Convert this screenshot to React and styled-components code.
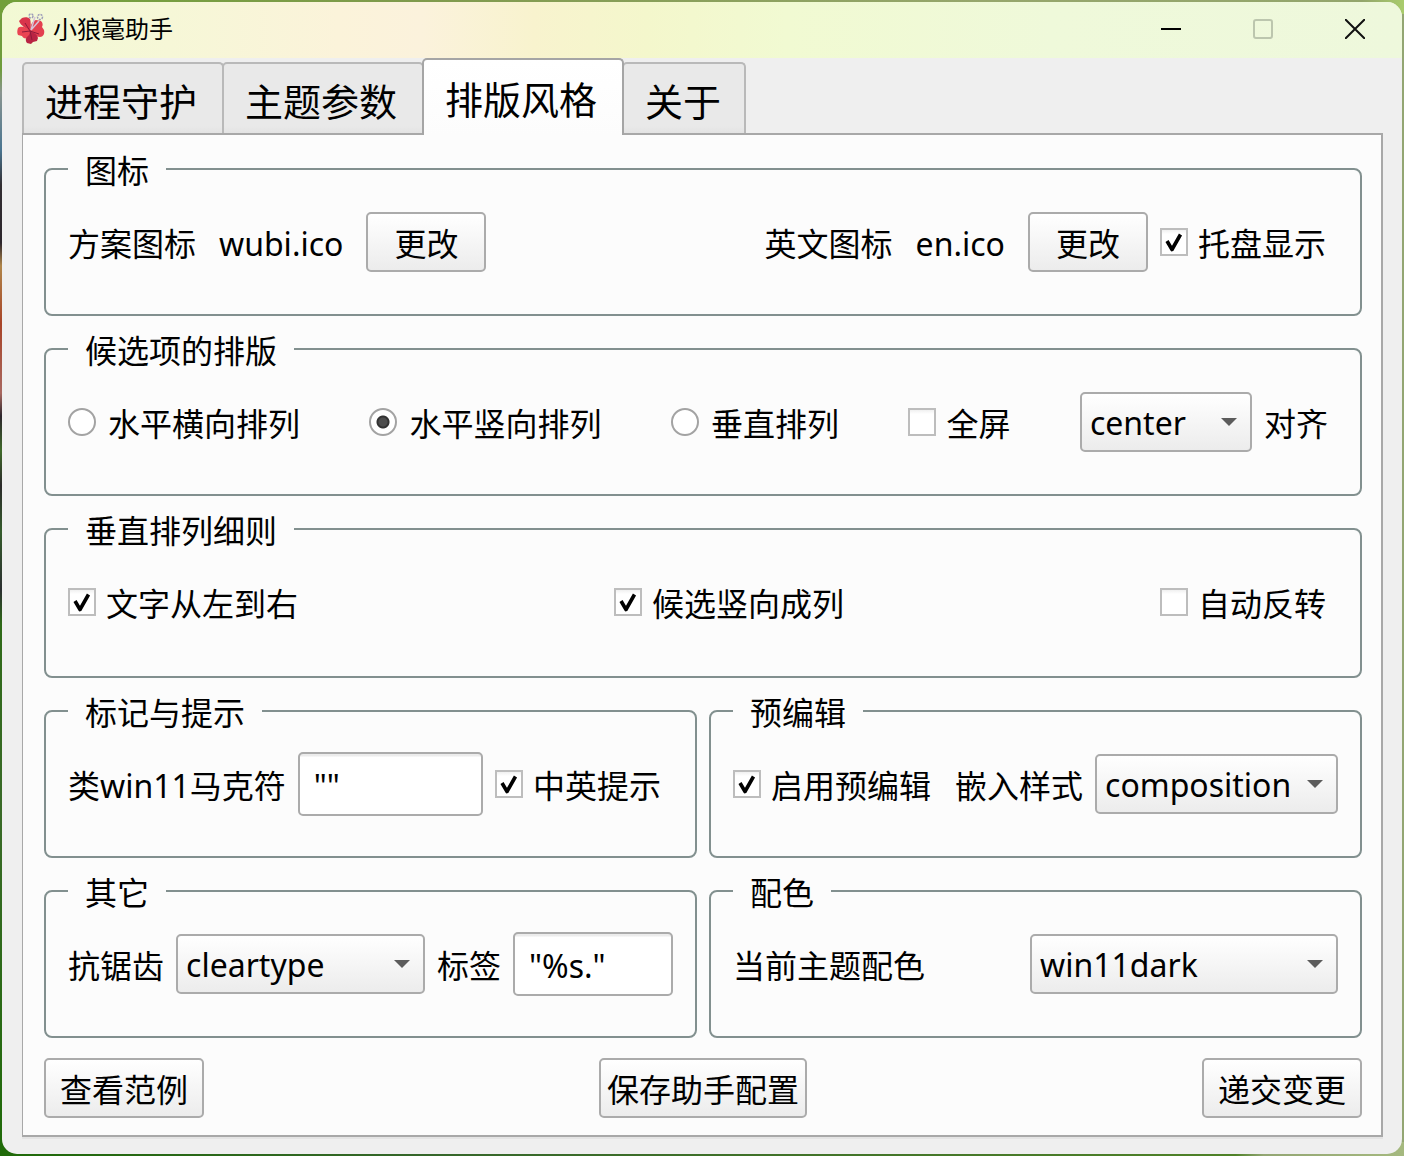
import React, { useState } from "react";
import styled, { createGlobalStyle, css } from "styled-components";

const GlobalStyle = createGlobalStyle`
  *, *::before, *::after { box-sizing: border-box; }
  body {
    margin: 0;
    color: #000;
    font-family: "Noto Sans", "Noto Sans CJK SC", sans-serif;
    font-size: 32px;
    line-height: 40px;
  }
  button, input, select { font: inherit; color: inherit; margin: 0; }
`;

const Desktop = styled.div`
  display: flex;
  min-height: 100vh;
  padding: 2px;
  background:
    linear-gradient(to right, #72a03a, #7f9a4c 30%, #96a66c 70%, #93a56c 97%, #a9cc6c) top / 100% 14px no-repeat,
    linear-gradient(to right, #1f6a08, #35662a 30%, #4f8228 88%, #93a673 90%, #a5b97f) bottom / 100% 14px no-repeat,
    linear-gradient(#6f9c3c 6%, #8a9590 8%, #4a7590 13%, #322e32 16%, #2c262c 21%, #b0864a 23%, #a84428 28%, #a86860 34%, #2c262c 36%, #3f6a2a 39%, #2b2a2a 42%, #355c2c 46%, #2b2f30 51%, #2f6a18 54%, #3a6a28 70%, #1f6a08) left / 50% 100% no-repeat,
    #93a673;
`;

const Window = styled.main`
  flex: 1;
  min-width: 0;
  display: flex;
  flex-direction: column;
  overflow: hidden;
  border-radius: 15px;
  background: #efefef;
`;

const TitleBar = styled.header`
  display: flex;
  align-items: center;
  height: 56px;
  padding: 0 1px 2px 15px;
  background: linear-gradient(to right, #f2f9d4, #f6f7d7 12%, #fbf3da 24%, #fbf2dc 30%, #f8f3ce 38%, #f4f7cc 46%, #f1fad2 56%, #eff9da 75%, #eef8dc);
`;

const Title = styled.h1`
  flex: 1;
  margin: 0 0 0 8px;
  font-size: 24px;
  font-weight: 400;
  line-height: 32px;
`;

const Caption = styled.button`
  display: grid;
  place-items: center;
  width: 92px;
  height: 54px;
  padding: 0;
  border: 0;
  background: none;
`;

const Tabs = styled.div`
  display: flex;
  align-items: flex-end;
  height: 75px;
  margin-left: 20px;
`;

const Tab = styled.button`
  height: 71px;
  margin-right: -2px;
  padding: 4px 25px 0 21px;
  border: 2px solid #b9b9b9;
  border-bottom: 0;
  border-radius: 5px 5px 0 0;
  background: linear-gradient(#e9e9e9 90%, #e3e3e3);
  font-size: 38px;
  line-height: 56px;
  white-space: nowrap;

  &:last-child {
    padding-right: 23px;
  }

  ${(p) => p.$active && css`
    position: relative;
    height: 77px;
    margin-bottom: -2px;
    padding-bottom: 2px;
    border-color: #a5a5a5;
    background: linear-gradient(#fff, #fcfcfc);
  `}
`;

const Panel = styled.section`
  flex: 1;
  display: flex;
  flex-direction: column;
  gap: 15px;
  margin: 0 19px 17px 20px;
  padding: 16px 19px 17px 21px;
  border: 2px solid #a8a8a8;
  border-left-width: 1px;
  background: #fcfcfc;
  box-shadow: 0 2px #e4e4e4;
`;

const Pair = styled.div`
  display: grid;
  grid-template-columns: repeat(2, minmax(0, 1fr));
  gap: 12px;
`;

const Group = styled.fieldset`
  min-width: 0;
  margin: 0;
  padding: 23px 22px ${(p) => (p.$roomy ? 42 : 40)}px;
  border: 2px solid #82908f;
  border-radius: 8px;
`;

const Legend = styled.legend`
  padding: 4px 17px 0;
  line-height: 32px;
`;

const Row = styled.div`
  display: flex;
  align-items: center;
  justify-content: ${(p) => (p.$spread ? "space-between" : "flex-start")};
  gap: 12px;
  height: 64px;
  white-space: nowrap;
`;

const Cluster = styled.div`
  display: flex;
  align-items: center;
  gap: 12px;
  margin-left: ${(p) => (p.$end ? "auto" : "0")};
  padding-right: ${(p) => (p.$inset ? 10 : 0)}px;
`;

const Text = styled.span`
  padding: 4px ${(p) => (p.$inset ? 11 : 0)}px 0 0;
`;

const FieldLabel = styled.label`
  padding-top: 4px;
`;

const Button = styled.button`
  min-width: ${(p) => p.$width}px;
  height: 60px;
  padding: 4px 4px 0;
  border: 2px solid #ababab;
  border-radius: 5px;
  background: linear-gradient(#fff, #ececec);
  white-space: nowrap;
`;

const OptionLabel = styled.label`
  display: flex;
  align-items: center;
  gap: ${(p) => p.$gap}px;
  padding-right: 12px;
`;

const Tick = styled.span`
  position: relative;
  flex: none;
  display: block;
  width: 28px;
  height: 28px;

  svg {
    position: absolute;
    inset: 0;
    pointer-events: none;
  }
`;

const CheckInput = styled.input`
  appearance: none;
  display: block;
  width: 28px;
  height: 28px;
  border: 2px solid #bdbdbd;
  background: linear-gradient(#f0f0f0, #fff 4px);
`;

const RadioInput = styled.input`
  appearance: none;
  flex: none;
  width: 28px;
  height: 28px;
  border: 2px solid #a3a3a3;
  border-radius: 50%;
  background: #fff;

  &:checked {
    background: radial-gradient(circle, #4d4d4d 4px, #333 5px 6px, #fff 7px);
  }
`;

const Field = styled.input`
  flex: ${(p) => (p.$width ? "none" : "1")};
  width: ${(p) => (p.$width ? `${p.$width}px` : "auto")};
  min-width: 0;
  height: 64px;
  padding: 2px 14px 0;
  border: 2px solid #ababab;
  border-radius: 5px;
  background: linear-gradient(#ececec 2px, #fff 3px);
`;

const SelectBox = styled.span`
  position: relative;
  flex: ${(p) => (p.$width ? "none" : "1")};
  width: ${(p) => (p.$width ? `${p.$width}px` : "auto")};
  min-width: 0;

  svg {
    position: absolute;
    top: 26px;
    right: 15px;
    pointer-events: none;
  }
`;

const Select = styled.select`
  appearance: none;
  display: block;
  width: 100%;
  height: 60px;
  padding: 2px 32px 0 8px;
  border: 2px solid #ababab;
  border-radius: 5px;
  background: linear-gradient(#fff, #ececec);
`;

const Footer = styled.footer`
  display: flex;
  justify-content: space-between;
  margin-top: 5px;
`;

function Flower() {
  return (
    <svg width="28" height="32" viewBox="0 0 28 32" aria-hidden="true">
      <g fill="none" stroke="#9c9bb8" strokeWidth="1.500">
        <circle cx="14" cy="3" r="2" strokeDasharray="2 1" />
        <circle cx="23" cy="4" r="2.500" strokeDasharray="2 1" />
      </g>
      <path fill="#d9344b" d="M13 18C8 15 4 12 3 10L2 8l3-3c3-1 6-1 8 1 1 3 1 8 0 12Z" />
      <path fill="#e3404f" d="M13 18c0-5 2-10 6-11l5 1c2 2 2 4 1 6l2 3c1 4-1 7-4 7-5 0-8-3-10-6Z" />
      <path fill="#ea4452" d="M13 18C9 13 3 13 1 15c-1 3-1 5 0 7l4 1c1 2 3 3 5 2 3-1 4-4 3-7Z" />
      <path fill="#b92443" d="M13 18c4 2 7 3 8 7l-1 3-4 1-2 2-4-1c-2-3-1-5 0-6 2-2 3-3 3-6Z" />
      <path fill="none" stroke="#8d1b3a" d="m13 18-8 1M13 18l9 3M13 18l2 9M13 18 8 10" />
      <path fill="none" stroke="#d4c3d8" strokeWidth="1.500" d="m14 17 3-10 1-3M14 17l8-9" />
    </svg>
  );
}

function Check({ label, on = false }) {
  const [checked, setChecked] = useState(on);
  return (
    <OptionLabel $gap={10}>
      <Tick>
        <CheckInput type="checkbox" checked={checked} onChange={() => setChecked(!checked)} />
        {checked && (
          <svg width="28" height="28" viewBox="0 0 28 28" aria-hidden="true">
            <path d="M7 13 12 21.500 20.500 6.500" fill="none" stroke="#000" strokeWidth="3.600" strokeLinejoin="round" />
          </svg>
        )}
      </Tick>
      <Text>{label}</Text>
    </OptionLabel>
  );
}

function Radio({ label, value, current, onPick }) {
  return (
    <OptionLabel $gap={12}>
      <RadioInput type="radio" name="layout" checked={current === value} onChange={() => onPick(value)} />
      <Text>{label}</Text>
    </OptionLabel>
  );
}

function Dropdown({ id, options, width }) {
  return (
    <SelectBox $width={width}>
      <Select id={id}>
        {options.map((o) => <option key={o}>{o}</option>)}
      </Select>
      <svg width="16" height="8" viewBox="0 0 16 8" aria-hidden="true">
        <path d="M0 0h16L8 8Z" fill="#5c5c5c" />
      </svg>
    </SelectBox>
  );
}

const TABS = ["进程守护", "主题参数", "排版风格", "关于"];

export default function App() {
  const [tab, setTab] = useState("排版风格");
  const [layout, setLayout] = useState("column");

  return (
    <>
      <GlobalStyle />
      <Desktop>
        <Window>
          <TitleBar>
            <Flower />
            <Title>小狼毫助手</Title>
            <Caption aria-label="最小化">
              <svg width="20" height="20" viewBox="0 0 20 20"><path d="M0 10h20" stroke="#000" strokeWidth="2" /></svg>
            </Caption>
            <Caption aria-label="最大化" disabled>
              <svg width="20" height="20" viewBox="0 0 20 20"><rect x="1" y="1" width="18" height="18" rx="2" fill="none" stroke="#bcc6ae" strokeWidth="2" /></svg>
            </Caption>
            <Caption aria-label="关闭">
              <svg width="20" height="20" viewBox="0 0 20 20"><path d="m0 0 20 20M20 0 0 20" stroke="#111" strokeWidth="2" /></svg>
            </Caption>
          </TitleBar>

          <Tabs role="tablist">
            {TABS.map((name) => (
              <Tab key={name} role="tab" aria-selected={tab === name} $active={tab === name} onClick={() => setTab(name)}>
                {name}
              </Tab>
            ))}
          </Tabs>

          <Panel role="tabpanel">
            <Group>
              <Legend>图标</Legend>
              <Row>
                <Text $inset>方案图标</Text>
                <Text $inset>wubi.ico</Text>
                <Button $width={120}>更改</Button>
                <Cluster $end>
                  <Text $inset>英文图标</Text>
                  <Text $inset>en.ico</Text>
                  <Button $width={120}>更改</Button>
                  <Check label="托盘显示" on />
                </Cluster>
              </Row>
            </Group>

            <Group>
              <Legend>候选项的排版</Legend>
              <Row $spread>
                <Radio label="水平横向排列" value="row" current={layout} onPick={setLayout} />
                <Radio label="水平竖向排列" value="column" current={layout} onPick={setLayout} />
                <Radio label="垂直排列" value="vertical" current={layout} onPick={setLayout} />
                <Check label="全屏" />
                <Cluster $inset>
                  <Dropdown id="align" width={172} options={["center", "top", "bottom"]} />
                  <FieldLabel htmlFor="align">对齐</FieldLabel>
                </Cluster>
              </Row>
            </Group>

            <Group $roomy>
              <Legend>垂直排列细则</Legend>
              <Row $spread>
                <Check label="文字从左到右" on />
                <Check label="候选竖向成列" on />
                <Check label="自动反转" />
              </Row>
            </Group>

            <Pair>
              <Group>
                <Legend>标记与提示</Legend>
                <Row>
                  <FieldLabel htmlFor="mark">类win11马克符</FieldLabel>
                  <Field id="mark" defaultValue={'""'} />
                  <Check label="中英提示" on />
                </Row>
              </Group>
              <Group>
                <Legend>预编辑</Legend>
                <Row>
                  <Check label="启用预编辑" on />
                  <FieldLabel htmlFor="preedit">嵌入样式</FieldLabel>
                  <Dropdown id="preedit" options={["composition", "preview"]} />
                </Row>
              </Group>
            </Pair>

            <Pair>
              <Group>
                <Legend>其它</Legend>
                <Row>
                  <FieldLabel htmlFor="antialias">抗锯齿</FieldLabel>
                  <Dropdown id="antialias" options={["cleartype", "grayscale"]} />
                  <FieldLabel htmlFor="tag">标签</FieldLabel>
                  <Field id="tag" $width={160} defaultValue={'"%s."'} />
                </Row>
              </Group>
              <Group>
                <Legend>配色</Legend>
                <Row $spread>
                  <FieldLabel htmlFor="scheme">当前主题配色</FieldLabel>
                  <Dropdown id="scheme" width={308} options={["win11dark", "win11light"]} />
                </Row>
              </Group>
            </Pair>

            <Footer>
              <Button $width={160}>查看范例</Button>
              <Button $width={208}>保存助手配置</Button>
              <Button $width={160}>递交变更</Button>
            </Footer>
          </Panel>
        </Window>
      </Desktop>
    </>
  );
}
